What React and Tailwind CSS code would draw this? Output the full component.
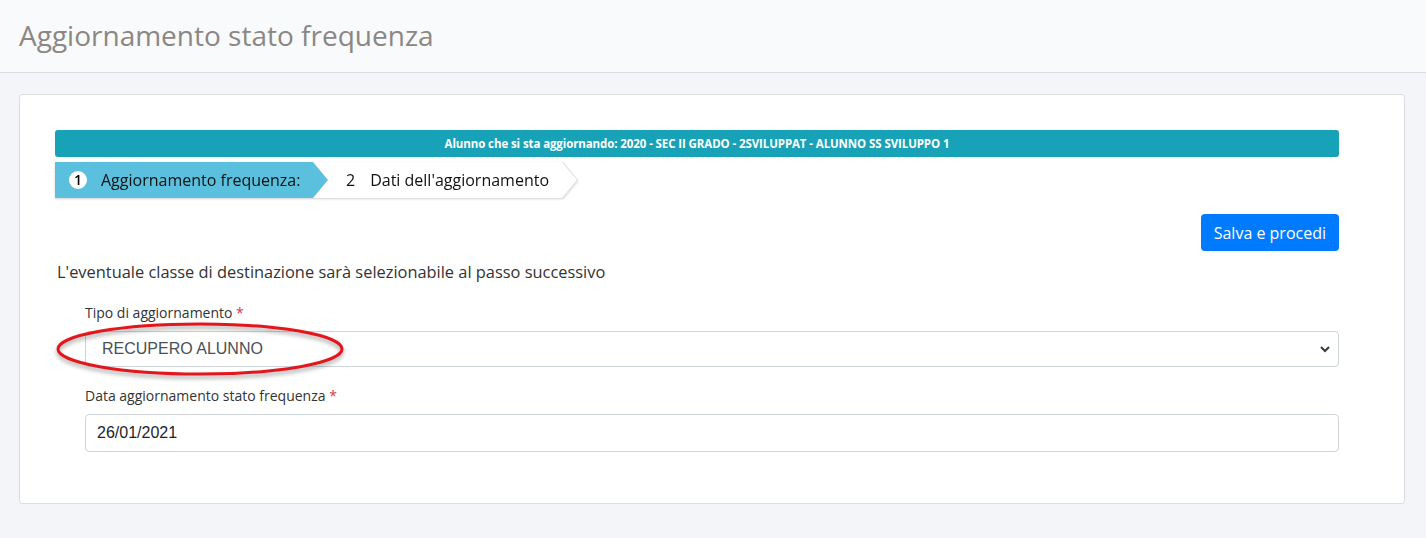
import React from "react";

export default function App() {
  return (
    <div className="min-h-[538px] bg-[#f4f5f9] font-['Open_Sans',sans-serif]">
      <div className="h-[73px] bg-[#f9fafc] border-b border-[#d9dee6] flex items-center pl-[19px]">
        <h1 className="text-[28px] text-[#8a8784] leading-none -mt-[2px]">Aggiornamento stato frequenza</h1>
      </div>

      <div className="ml-[19px] mr-[21px] mt-[21px] bg-white border border-[#dcdde2] rounded-[3px] pt-[35px] pl-[35px] pr-[65px] pb-[51px]">
        <div className="h-[27px] bg-[#17a2b8] rounded-[3px] flex items-center justify-center">
          <span className="text-white text-[11.5px] font-bold tracking-[-0.1px]">
            Alunno che si sta aggiornando: 2020 - SEC II GRADO - 2SVILUPPAT - ALUNNO SS SVILUPPO 1
          </span>
        </div>

        <div className="mt-[5px] flex h-[36px] drop-shadow-[0_1px_1px_rgba(0,0,0,0.18)]">
          <div className="relative z-10 w-[273px] bg-[#5bc0de] flex items-center pl-[14px] [clip-path:polygon(0_0,258px_0,100%_50%,258px_100%,0_100%)]">
            <span className="w-[18px] h-[18px] rounded-full bg-white text-[14px] font-semibold text-black flex items-center justify-center leading-none">1</span>
            <span className="ml-[14px] text-[16px] text-[#111]">Aggiornamento frequenza:</span>
          </div>
          <div className="relative -ml-[15px] w-[265px] bg-white flex items-center pl-[33px] [clip-path:polygon(0_0,250px_0,100%_50%,250px_100%,0_100%)]">
            <span className="text-[16px] text-[#111]">2</span>
            <span className="ml-[15px] text-[16px] text-[#111]">Dati dell'aggiornamento</span>
            <svg className="absolute right-0 top-0" width="16" height="36" viewBox="0 0 16 36">
              <path d="M0.5 0 L15.5 18 L0.5 36" fill="none" stroke="#d6d6d6" strokeWidth="1" />
            </svg>
          </div>
        </div>

        <div className="mt-[16px] flex justify-end">
          <button className="h-[37px] px-[13px] bg-[#007bff] text-white text-[16px] rounded-[4px]">Salva e procedi</button>
        </div>

        <p className="mt-[9px] ml-[2px] text-[16.4px] leading-[24px] text-[#333]">
          L'eventuale classe di destinazione sarà selezionabile al passo successivo
        </p>

        <div className="ml-[30px]">
          <label className="block mt-[18px] text-[14px] leading-[21px] text-[#333]">
            Tipo di aggiornamento <span className="text-[#dc3545]">*</span>
          </label>
          <div className="relative mt-[8px]">
            <div className="h-[36px] border border-[#ced4da] rounded-[4px] flex items-center justify-between pl-[16px] pr-[8px] font-['Liberation_Sans',Arial,sans-serif] text-[16px] text-[#495057]">
              <span>RECUPERO ALUNNO</span>
              <svg width="10" height="8" viewBox="0 0 10 8">
                <path d="M1 2 L5 6 L9 2" fill="none" stroke="#343a40" strokeWidth="2" />
              </svg>
            </div>
            <svg className="absolute -left-[30px] -top-[10px] drop-shadow-[0_3px_2px_rgba(0,0,0,0.35)]" width="292" height="58" viewBox="0 0 292 58">
              <ellipse cx="145" cy="28" rx="142" ry="25" fill="none" stroke="#e4161b" strokeWidth="3" />
            </svg>
          </div>

          <label className="block mt-[18px] text-[14px] leading-[21px] text-[#333]">
            Data aggiornamento stato frequenza <span className="text-[#dc3545]">*</span>
          </label>
          <div className="mt-[8px] h-[38px] border border-[#ced4da] rounded-[4px] flex items-center pl-[11px] font-['Liberation_Sans',Arial,sans-serif] text-[16px] text-[#212529]">
            26/01/2021
          </div>
        </div>
      </div>
    </div>
  );
}
